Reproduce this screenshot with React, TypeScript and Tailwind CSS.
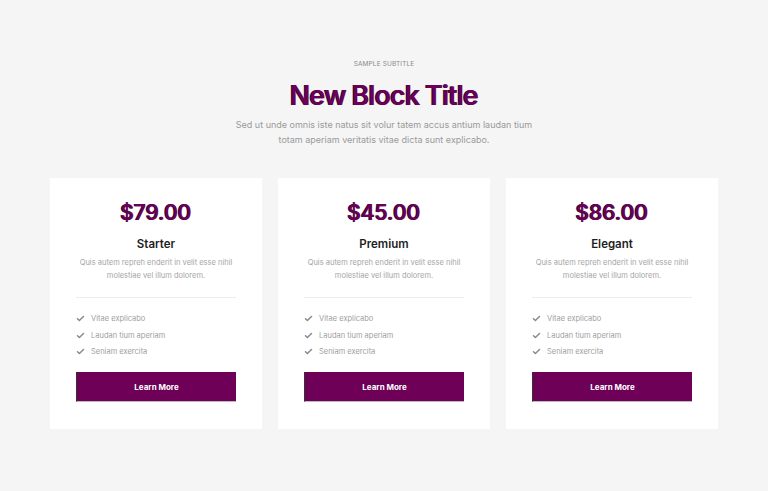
import React from "react";

const plans = [
  { price: "$79.00", name: "Starter" },
  { price: "$45.00", name: "Premium" },
  { price: "$86.00", name: "Elegant" },
];

const features = ["Vitae explicabo", "Laudan tium aperiam", "Seniam exercita"];

function Check() {
  return (
    <svg width="9" height="9" viewBox="0 0 24 24" fill="none" stroke="#8a8a8a" strokeWidth="4" strokeLinecap="round" strokeLinejoin="round">
      <path d="M4 12.5l5 5L20 6.5" />
    </svg>
  );
}

export default function App() {
  return (
    <div className="w-[768px] h-[491px] bg-[#f5f5f5] font-['Inter',sans-serif] flex flex-col items-center pt-[60px]">
      <div className="text-[6.5px] tracking-[0.02em] text-[#8a8a8a] uppercase leading-[9px]">Sample Subtitle</div>
      <h1 className="mt-[10px] text-[27px] leading-[34px] font-semibold tracking-[-0.035em] text-[#6a0058] [text-shadow:-1px_0_0_#2a0a24]">
        New Block Title
      </h1>
      <p className="mt-[4px] text-[9px] leading-[15px] text-[#9a9a9a] text-center w-[320px]">
        Sed ut unde omnis iste natus sit volur tatem accus antium laudan tium totam aperiam veritatis vitae dicta sunt explicabo.
      </p>
      <div className="mt-[31px] flex gap-[16px]">
        {plans.map((p) => (
          <div key={p.name} className="w-[212px] h-[251px] bg-white px-[26px] pt-[21px] flex flex-col items-center">
            <div className="text-[21px] leading-[28px] font-semibold text-[#6a0058] [text-shadow:-1px_0_0_#2a0a24] tracking-[-0.01em]">
              {p.price}
            </div>
            <div className="mt-[10px] text-[11.5px] leading-[14px] font-semibold text-[#1e1e1e]">{p.name}</div>
            <p className="mt-[6px] text-[7.5px] leading-[12.5px] text-[#a5a5a5] text-center">
              Quis autem repreh enderit in velit esse nihil molestiae vel illum dolorem.
            </p>
            <div className="mt-[15px] w-full h-px bg-[#ececec]" />
            <ul className="mt-[15px] w-full flex flex-col gap-[5.5px]">
              {features.map((f) => (
                <li key={f} className="flex items-center gap-[6px] text-[7.5px] leading-[11px] text-[#a0a0a0]">
                  <Check />
                  {f}
                </li>
              ))}
            </ul>
            <button className="mt-[15px] w-full h-[30px] bg-[#6e0058] border-l border-b border-l-[#333] border-b-[#bbb] text-white text-[8px] font-bold">
              Learn More
            </button>
          </div>
        ))}
      </div>
    </div>
  );
}
